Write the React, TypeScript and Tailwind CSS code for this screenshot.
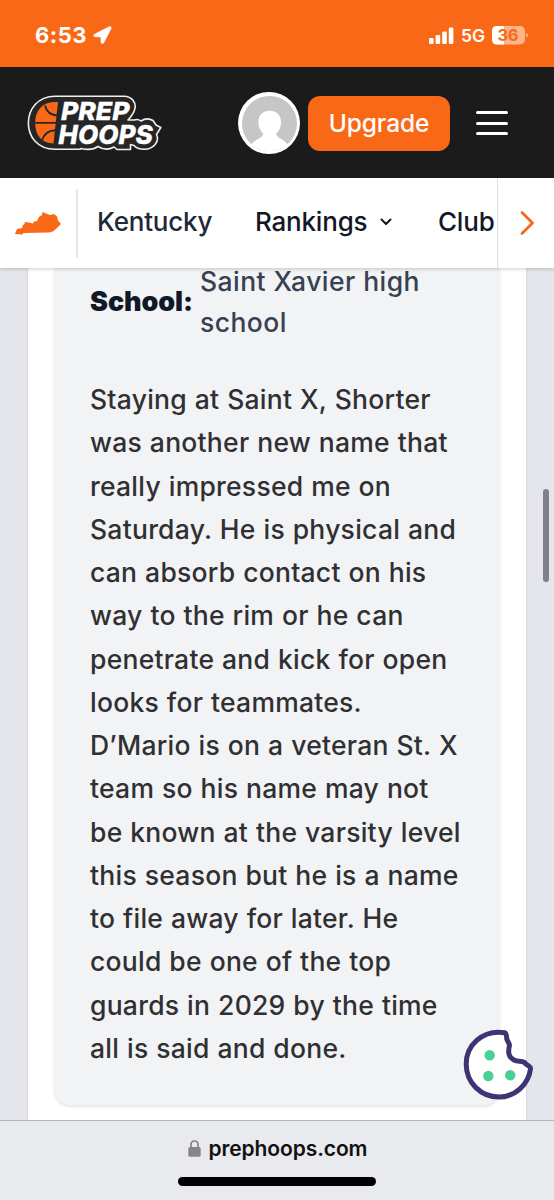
import { ReactNode } from 'react';

const articleLines = [
  'Staying at Saint X, Shorter',
  'was another new name that',
  'really impressed me on',
  'Saturday. He is physical and',
  'can absorb contact on his',
  'way to the rim or he can',
  'penetrate and kick for open',
  'looks for teammates.',
  'D’Mario is on a veteran St. X',
  'team so his name may not',
  'be known at the varsity level',
  'this season but he is a name',
  'to file away for later. He',
  'could be one of the top',
  'guards in 2029 by the time',
  'all is said and done.',
];

function StatusBar() {
  return (
    <div className="flex h-[67px] shrink-0 items-start justify-between bg-[#f96816] pl-[35px] pr-[26px] pt-[23px] text-white">
      <div className="flex h-6 items-center">
        <span className="w-[52px] whitespace-nowrap text-[22px] font-bold leading-6 tracking-[0.5px]">6:53</span>
        <svg className="ml-[6px]" width="19" height="19" viewBox="0 0 19 19">
          <path d="M1.5 8.2 16 .8Q18.8 0 18 2.8L10.9 16.6Q9 19 8 16.5L7.8 11 2.2 10.8Q-.8 10.2 1.5 8.2Z" fill="currentColor" stroke="currentColor" strokeWidth="0.5" />
        </svg>
      </div>
      <div className="flex h-6 items-center">
        <svg width="25" height="17" viewBox="0 0 25 17" fill="currentColor">
          <rect x="0" y="11" width="4.6" height="6" rx="1.3" />
          <rect x="6.6" y="8" width="4.6" height="9" rx="1.3" />
          <rect x="13.2" y="4.5" width="4.6" height="12.5" rx="1.3" />
          <rect x="19.8" y="0.5" width="4.6" height="16.5" rx="1.3" />
        </svg>
        <span className="ml-[7px] mt-[2px] w-[24px] whitespace-nowrap text-[17.5px] font-semibold leading-6 tracking-[-0.1px]">5G</span>
        <svg className="ml-[7px]" width="36" height="19" viewBox="0 0 36 19">
          <rect x="0" y="0" width="33" height="18.5" rx="5" fill="#fcb58b" />
          <path d="M5 0H12V18.5H5Q0 18.5 0 13.5V5Q0 0 5 0Z" fill="#fff" />
          <path d="M34 7Q36 7.4 36 9.3Q36 11.2 34 11.6Z" fill="#fcb58b" />
          <text x="5.5" y="15" fontSize="16.5" fontWeight="700" textLength="21" fill="#f96816">36</text>
        </svg>
      </div>
    </div>
  );
}

function Logo() {
  return (
    <svg width="136" height="58" viewBox="27 94 136 58" className="shrink-0">
      <path
        d="M55 96.3H124C132 96.3 137 103 134.5 110C133.5 114 130.5 117 128 120L134 120Q138 118.5 141 121Q147 117 153 120.5L156 125L160.8 127.5L156.5 134.5C160 142 153 149.5 144 149.3Q137 149 134 145.5L130.5 144.5V149.5H117L114 147Q106 151.5 98 146.5Q92 151 81 148.5L80 149.3H55C19 149.3 20 96.3 55 96.3Z"
        fill="#262626"
        stroke="#f0eeec"
        strokeWidth="1.6"
        strokeLinejoin="round"
      />
      <path d="M58 102Q36 101 35 123Q36 143 53.5 143.5Z" fill="#f96816" />
      <path d="M34 122.8H56M45 105.5Q47 115 58 115.5M42 140Q46 130 55 130.5" fill="none" stroke="#262626" strokeWidth="1.8" />
      <g fill="#fff" stroke="#fff" strokeWidth="0.3" fontStyle="italic" fontWeight="800" fontFamily="Inter, sans-serif">
        <text x="61" y="120" fontSize="25" textLength="68.5" lengthAdjust="spacingAndGlyphs">PREP</text>
        <text x="58.3" y="143.7" fontSize="25.5" textLength="94.5" lengthAdjust="spacingAndGlyphs">HOOPS</text>
      </g>
    </svg>
  );
}

function SiteHeader() {
  return (
    <header className="flex h-[111px] shrink-0 items-center bg-[#1b1b1b] pl-[27px] pt-px">
      <Logo />
      <div className="ml-[75px] flex size-[62px] items-center justify-center rounded-full bg-white">
        <svg width="55" height="55" viewBox="0 0 55 55">
          <circle cx="27.5" cy="27.5" r="27.5" fill="#c6c6c6" />
          <path d="M27.7 14.8C35 14.8 39.5 19.8 39 27C38.8 32 36.7 35.3 34.2 37.5C34 41.5 40 42 45.7 48.2A27.5 27.5 0 0 1 9.3 48.2C15 42 21.4 41.5 21.2 37.5C18.7 35.3 16.6 32 16.4 27C15.9 19.8 20.4 14.8 27.7 14.8Z" fill="#fff" />
        </svg>
      </div>
      <button className="ml-[8px] h-[55px] w-[142px] rounded-[12px] bg-[#f96816] text-[24.5px] font-[550] leading-none tracking-[-0.1px] text-white">
        Upgrade
      </button>
      <div className="ml-[26px] flex w-[32px] flex-col gap-[7.5px]">
        <span className="h-[3px] rounded-full bg-white" />
        <span className="h-[3px] rounded-full bg-white" />
        <span className="h-[3px] rounded-full bg-white" />
      </div>
    </header>
  );
}

function NavItem({ className, children }: { className: string; children: ReactNode }) {
  return (
    <a className={`mb-[3px] shrink-0 whitespace-nowrap text-[26px] font-[550] leading-10 tracking-[-0.2px] ${className}`}>
      {children}
    </a>
  );
}

function StateNav() {
  return (
    <nav className="relative z-10 flex h-[90px] shrink-0 items-center bg-white shadow-[0_1px_4px_rgba(0,0,0,0.2)]">
      <svg className="ml-[15px] shrink-0" width="46" height="24" viewBox="0 0 46 24">
        <path
          d="M0 23 2 18 7 17 8 13.5 9 14 10 11 14 11.5 18 12.5 19 10.5 22 10 24 6 27 4 27.5 1 31 2.5 35 4 39 3 42 5.5 43 9.5 46 13 42 17 38 20.5 34 21.5 8 22V23.5Z"
          fill="#f96816"
        />
      </svg>
      <div className="ml-[15px] h-[69px] w-[2px] shrink-0 bg-[#e7e7e9]" />
      <NavItem className="ml-[19px] w-[158px] text-[#1f2937]">Kentucky</NavItem>
      <NavItem className="w-[125px] text-[#111827]">Rankings</NavItem>
      <svg className="mb-[3px] shrink-0" width="12" height="8" viewBox="0 0 12 8">
        <path d="M1.5 1.5 6 6 10.5 1.5" fill="none" stroke="#111827" strokeWidth="2" strokeLinecap="round" strokeLinejoin="round" />
      </svg>
      <NavItem className="ml-[46px] w-[59px] text-[#111827]">Club</NavItem>
      <div className="flex h-full w-[57px] shrink-0 items-center justify-center border-l border-[#dcdee2]">
        <svg className="ml-[2px]" width="16" height="26" viewBox="0 0 16 26">
          <path d="M3 2.5 13.5 13 3 23.5" fill="none" stroke="#f96816" strokeWidth="2.8" strokeLinecap="round" strokeLinejoin="round" />
        </svg>
      </div>
    </nav>
  );
}

function PlayerCard() {
  return (
    <div className="h-[837px] rounded-b-[16px] bg-[#f2f3f5] pl-[36px] shadow-[0_2px_3px_rgba(0,0,0,0.1)]">
      <div className="flex h-[75px] items-center">
        <span className="w-[110px] shrink-0 whitespace-nowrap pb-[7px] text-[27px] font-black leading-10 tracking-[-0.1px] text-[#111827]">
          School:
        </span>
        <span className="whitespace-nowrap pb-[7px] text-[26.5px] font-medium leading-[41.5px] tracking-[0.45px] text-[#374151]">
          Saint Xavier high
          <br />
          school
        </span>
      </div>
      <div className="mt-[35px] whitespace-nowrap text-[26.5px] font-[550] leading-[43.27px] tracking-[0.25px] text-[#303033] [word-spacing:0.5px]">
        {articleLines.map((line) => (
          <p key={line}>{line}</p>
        ))}
      </div>
    </div>
  );
}

function CookieButton() {
  return (
    <svg className="absolute left-[463px] top-[1029px] z-20" width="72" height="72" viewBox="0 0 72 72">
      <path
        d="M42 3.7C19 0 3.2 17 3.2 35C3.2 54 18 68 36 68C52 68 66 55 67.5 39.5C67.6 37 64 37 61.5 33.5C58 31.5 55 33 51 31C45 28 45 23 46.5 16C45 11 43.5 12 43.5 7.5Q43.2 4.2 42 3.7Z"
        fill="#fff"
        stroke="#3d3474"
        strokeWidth="5"
        strokeLinejoin="round"
      />
      <g fill="#48d096">
        <circle cx="26.7" cy="26.3" r="5.2" />
        <circle cx="25.3" cy="47" r="5.2" />
        <circle cx="47.2" cy="46.2" r="5.2" />
      </g>
    </svg>
  );
}

function AddressBar() {
  return (
    <footer className="flex h-[80px] shrink-0 flex-col items-center border-t border-[#b5b6ba] bg-[#e9eaee]">
      <div className="mt-[14px] flex h-[27px] items-center">
        <svg className="ml-[2px]" width="13" height="17" viewBox="0 0 13 17">
          <rect x="0.3" y="7" width="12.4" height="9.7" rx="1.8" fill="#858588" />
          <path d="M3 8V4.7Q3 1 6.5 1T10 4.7V8" fill="none" stroke="#858588" strokeWidth="1.7" />
        </svg>
        <span className="ml-[8px] w-[160px] whitespace-nowrap text-[21px] font-semibold leading-[27px] tracking-[-0.1px] text-[#111]">
          prephoops.com
        </span>
      </div>
      <div className="mt-[15px] h-[9px] w-[198px] rounded-full bg-black" />
    </footer>
  );
}

export default function App() {
  return (
    <div className="relative flex h-[1200px] w-[554px] flex-col overflow-hidden bg-[#e5e6eb] font-[Inter,sans-serif]">
      <StatusBar />
      <SiteHeader />
      <StateNav />
      <main className="flex-1 pl-[28px] pr-[28px]">
        <div className="h-full bg-white pl-[26px] pr-[26px] shadow-[0_0_2px_rgba(0,0,0,0.15)]">
          <PlayerCard />
        </div>
      </main>
      <div className="absolute right-[5px] top-[489px] h-[93px] w-[6px] rounded-full bg-[#808086]" />
      <CookieButton />
      <AddressBar />
    </div>
  );
}
